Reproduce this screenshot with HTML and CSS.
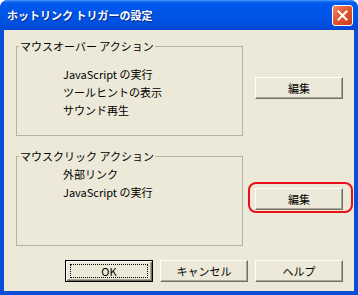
FILE: index.html
```html
<!DOCTYPE html>
<html lang="ja">
<head>
<meta charset="UTF-8">
<title>ホットリンク トリガーの設定</title>
<link rel="stylesheet" href="styles.css">
</head>
<body>

<div class="window">
  <!-- タイトルバー -->
  <div class="titlebar">
    <span class="title">ホットリンク トリガーの設定</span>
    <button class="close" aria-label="閉じる">
      <svg width="11" height="11" viewBox="0 0 11 11">
        <path d="M1.5 1.5 L9.5 9.5 M9.5 1.5 L1.5 9.5" stroke="#fff" stroke-width="2" stroke-linecap="square"/>
      </svg>
    </button>
  </div>

  <div class="client">
    <!-- マウスオーバー -->
    <div class="row">
      <fieldset class="group">
        <legend>マウスオーバー アクション</legend>
        <ul class="items items-over">
          <li>JavaScript の実行</li>
          <li>ツールヒントの表示</li>
          <li>サウンド再生</li>
        </ul>
      </fieldset>
      <div class="side side-over">
        <button class="btn">編集</button>
      </div>
    </div>

    <!-- マウスクリック -->
    <div class="row">
      <fieldset class="group">
        <legend>マウスクリック アクション</legend>
        <ul class="items items-click">
          <li>外部リンク</li>
          <li>JavaScript の実行</li>
        </ul>
      </fieldset>
      <div class="side side-click">
        <div class="mark">
          <button class="btn">編集</button>
        </div>
      </div>
    </div>

    <div class="footer">
      <button class="btn btn-default">OK</button>
      <button class="btn">キャンセル</button>
      <button class="btn">ヘルプ</button>
    </div>
  </div>
</div>

</body>
</html>
```

FILE: styles.css
```css
body {
  margin: 0;
  background: #fff;
  font-family: "Noto Sans CJK JP", "DejaVu Sans", sans-serif;
  font-size: 11px;
  color: #000;
}
.window {
  width: 358px;
  height: 295px;
  display: flex;
  flex-direction: column;
  background: #0a4ed8;
  border-radius: 8px 8px 0 0;
  overflow: hidden;
}
.titlebar {
  height: 30px;
  flex: none;
  display: flex;
  align-items: center;
  justify-content: space-between;
  padding: 0 5px 0 7px;
  background: linear-gradient(#4f9bff 0, #0a62ea 2px, #0058ee 4px, #0056e9 40%, #0050e0 75%, #0646d4 100%);
}
.title {
  color: #fff;
  font-weight: bold;
  font-size: 11px;
  text-shadow: 1px 1px 0 #0a2a8a;
}
.close {
  width: 21px;
  height: 21px;
  padding: 0;
  display: flex;
  align-items: center;
  justify-content: center;
  border: 1px solid #fff;
  border-radius: 3px;
  background: linear-gradient(135deg, #f08a68 0, #e2582f 45%, #c93c1a 100%);
}
.client {
  flex: 1;
  margin: 0 4px 4px;
  padding: 10px 11px 9px 12px;
  background: #ece9d8;
  display: flex;
  flex-direction: column;
  gap: 14px;
}
.row {
  display: flex;
  gap: 12px;
}
.group {
  width: 227px;
  height: 96px;
  box-sizing: border-box;
  margin: 0;
  padding: 0 0 0 2px;
  border: 1px solid #b5b2a3;
}
.group legend {
  padding: 0 1px;
  line-height: 12px;
}
.items {
  list-style: none;
  margin: 0 0 0 44px;
  padding: 0;
  line-height: 18px;
}
.items-over {
  margin-top: 13px;
}
.items-click {
  margin-top: 3px;
}
.side-over {
  padding-top: 37px;
}
.side-click {
  padding-top: 38px;
}
.mark {
  position: relative;
}
.mark::before {
  content: "";
  position: absolute;
  top: -6px;
  left: -7px;
  right: -10px;
  bottom: -3px;
  border: 2px solid #e8101a;
  border-radius: 8px;
}
.btn {
  width: 88px;
  height: 22px;
  padding: 0;
  font-family: inherit;
  font-size: 11px;
  color: #000;
  background: #ece9d8;
  border: 1px solid;
  border-color: #fff #716f64 #716f64 #fff;
  box-shadow: inset -1px -1px 0 #aca899;
}
.footer {
  display: flex;
  justify-content: flex-end;
  gap: 7px;
}
.btn-default {
  position: relative;
  border-color: #000;
  box-shadow: inset 1px 1px 0 #fff, inset -1px -1px 0 #716f64, inset -2px -2px 0 #aca899;
}
.btn-default::after {
  content: "";
  position: absolute;
  top: 3px;
  left: 4px;
  right: 4px;
  bottom: 3px;
  border: 1px dotted #000;
}
```
